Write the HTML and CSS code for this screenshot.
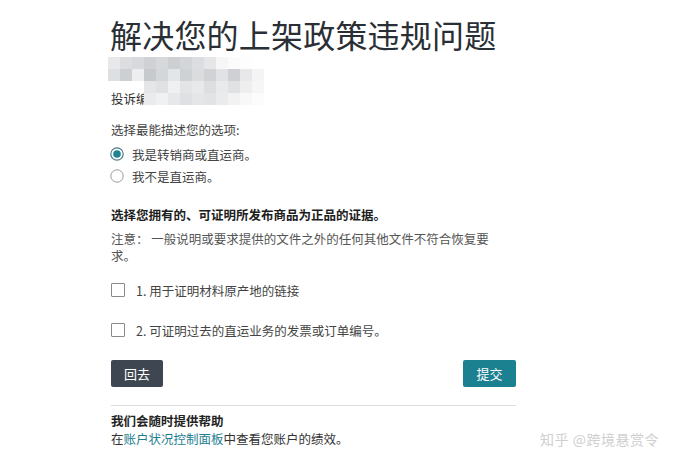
FILE: index.html
```html
<!DOCTYPE html>
<html lang="zh-CN">
<head>
<meta charset="utf-8">
<title>解决您的上架政策违规问题</title>
<link rel="stylesheet" href="styles.css">
</head>
<body>
<div class="page">
  <h1 class="title">解决您的上架政策违规问题</h1>
  <div class="blur-block">
    <span class="complaint">投诉编</span>
    <div class="mosaic">
      <div class="mrow">
        <i style="background:#e8e8ea"></i><i style="background:#dcdde0"></i><i style="background:#d8d9dc"></i><i style="background:#cfd1d4"></i><i style="background:#d6d8da"></i><i style="background:#cdd0d3"></i><i style="background:#d4d5d8"></i><i style="background:#dcdde0"></i><i style="background:#e6e6e8"></i><i style="background:#f6f6f6"></i><i style="background:#fbfbfb"></i><i style="background:#fdfdfd"></i>
      </div>
      <div class="mrow">
        <i style="background:#dedfe1"></i><i style="background:#cdd0d3"></i><i style="background:#eceeef"></i><i style="background:#c6cacd"></i><i style="background:#d4d6d8"></i><i style="background:#e3e6e8"></i><i style="background:#cfd2d4"></i><i style="background:#dadcde"></i><i style="background:#d0d2d5"></i><i style="background:#e1e2e4"></i><i style="background:#cfd0d3"></i><i style="background:#e8e8ea"></i><i style="background:#f4f4f4"></i>
      </div>
      <div class="mrow">
        <b></b><b></b><b></b><i style="background:#e4e6e8"></i><i style="background:#dfe1e3"></i><i style="background:#eef0f1"></i><i style="background:#e2e4e6"></i><i style="background:#e8e9eb"></i><i style="background:#dcdee0"></i><i style="background:#e9eaec"></i><i style="background:#e0e1e3"></i><i style="background:#eeeeef"></i><i style="background:#f6f6f6"></i>
      </div>
      <div class="mrow">
        <b></b><b></b><b></b><i style="background:#eaebed"></i><i style="background:#f0f1f2"></i><i style="background:#e7e8ea"></i><i style="background:#dfe0e3"></i><i style="background:#e5e6e8"></i><i style="background:#e2e3e5"></i><i style="background:#eaebec"></i><i style="background:#f2f2f3"></i><i style="background:#f8f8f8"></i><i style="background:#fcfcfc"></i>
      </div>
    </div>
  </div>

  <p class="label">选择最能描述您的选项:</p>
  <div class="radios">
    <div class="radio-row">
      <svg class="radio" width="14" height="14" viewBox="0 0 14 14"><circle cx="7" cy="7" r="6.2" fill="#fff" stroke="#4f7d86" stroke-width="1.2"/><circle cx="7" cy="7" r="3.8" fill="#1e8494"/></svg>
      <span>我是转销商或直运商。</span>
    </div>
    <div class="radio-row">
      <svg class="radio" width="14" height="14" viewBox="0 0 14 14"><circle cx="7" cy="7" r="6.2" fill="#fff" stroke="#9a9a9a" stroke-width="1"/></svg>
      <span>我不是直运商。</span>
    </div>
  </div>

  <h2 class="section-title">选择您拥有的、可证明所发布商品为正品的证据。</h2>
  <p class="note">注意： 一般说明或要求提供的文件之外的任何其他文件不符合恢复要求。</p>

  <div class="checks">
    <div class="check-row"><span class="box"></span><span>1. 用于证明材料原产地的链接</span></div>
    <div class="check-row"><span class="box"></span><span>2. 可证明过去的直运业务的发票或订单编号。</span></div>
  </div>

  <div class="actions">
    <button class="btn btn-back">回去</button>
    <button class="btn btn-submit">提交</button>
  </div>

  <div class="help">
    <h3 class="help-title">我们会随时提供帮助</h3>
    <p class="help-text">在<a class="link" href="#">账户状况控制面板</a>中查看您账户的绩效。</p>
  </div>
</div>
<div class="watermark">知乎 @跨境悬赏令</div>
</body>
</html>
```

FILE: styles.css
```css
html, body {
  margin: 0;
  padding: 0;
  background: #ffffff;
}
body {
  font-family: "Noto Sans CJK SC", "Noto Sans", sans-serif;
  color: #333333;
  font-size: 12.5px;
  position: relative;
  width: 675px;
  height: 472px;
  overflow: hidden;
}
.page {
  padding: 14px 0 0 111px;
  width: 405px;
}
.title {
  margin: 0;
  font-size: 32px;
  line-height: 40px;
  font-weight: 400;
  color: #2a2f35;
  letter-spacing: 0.2px;
  margin-left: -1px;
}
.blur-block {
  position: relative;
  margin-top: 3px;
  margin-left: -3px;
  height: 48px;
}
.mosaic {
  position: relative;
  z-index: 1;
  display: flex;
  flex-direction: column;
}
.mrow {
  display: flex;
  height: 12px;
}
.mrow i, .mrow b {
  display: block;
  width: 12px;
  height: 12px;
}
.complaint {
  position: absolute;
  left: 3px;
  top: 34px;
  line-height: 16px;
  color: #333;
}
.label {
  margin: 16px 0 0;
  line-height: 18px;
  color: #444;
}
.radios {
  margin-top: 4px;
}
.radio-row {
  display: flex;
  align-items: center;
  height: 22px;
  color: #444;
}
.radio {
  margin-left: -1px;
  margin-right: 8px;
  flex: none;
}
.section-title {
  margin: 19px 0 0;
  font-size: 12.5px;
  line-height: 18px;
  font-weight: 700;
  color: #1d1d1d;
}
.note {
  margin: 6px 0 0;
  width: 385px;
  line-height: 17px;
  color: #555;
}
.checks {
  margin-top: 16px;
  display: flex;
  flex-direction: column;
  gap: 20px;
}
.check-row {
  display: flex;
  align-items: center;
  height: 20px;
  color: #444;
}
.box {
  width: 12px;
  height: 12px;
  border: 1px solid #8a8a8a;
  border-radius: 1px;
  margin-right: 11px;
  flex: none;
}
.actions {
  margin-top: 20px;
  display: flex;
  justify-content: space-between;
}
.btn {
  height: 27px;
  border: none;
  border-radius: 2px;
  color: #ffffff;
  font-family: inherit;
  font-size: 13px;
  padding: 0;
  cursor: pointer;
}
.btn-back {
  width: 52px;
  background: #3e4651;
}
.btn-submit {
  width: 53px;
  background: #1b8090;
}
.help {
  margin-top: 18px;
  border-top: 1px solid #dddddd;
  padding-top: 6px;
}
.help-title {
  margin: 0;
  font-size: 12.5px;
  line-height: 18px;
  font-weight: 700;
  color: #222;
}
.help-text {
  margin: 0;
  line-height: 18px;
  color: #333;
}
.link {
  color: #1c7d8f;
  text-decoration: none;
}
.watermark {
  position: absolute;
  left: 540px;
  top: 429px;
  font-size: 14px;
  line-height: 20px;
  color: #cfcfcf;
  letter-spacing: 0.5px;
  text-shadow: 0 0 1px #ffffff, 1px 1px 0 #ffffff;
  white-space: nowrap;
}
```
